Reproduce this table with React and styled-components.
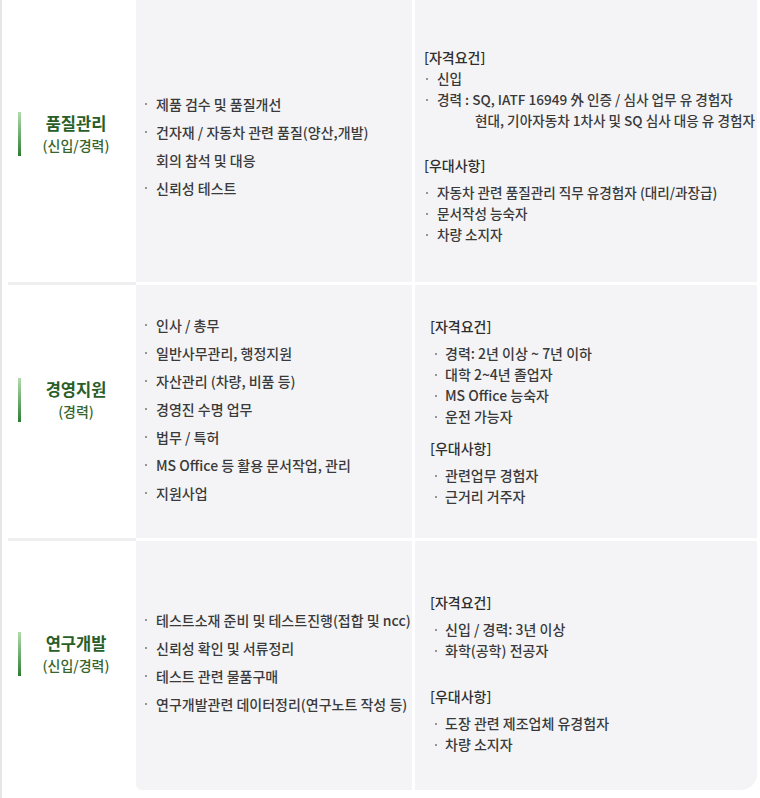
import React from "react";
import styled, { createGlobalStyle } from "styled-components";

const GlobalStyle = createGlobalStyle`
  body {
    margin: 0;
    background: #fff;
    font-family: "Noto Sans CJK KR", "Noto Sans", sans-serif;
  }
`;

const Page = styled.div`
  width: 760px;
  height: 798px;
  overflow: hidden;
  box-sizing: border-box;
  border-left: 2px solid #e6e6e6;
  padding: 0 3px 0 6px;
`;

const Table = styled.div`
  display: flex;
  flex-direction: column;
  margin-top: -10px;
`;

const Row = styled.div`
  display: grid;
  grid-template-columns: 128px 276px 1fr;
  height: ${(p) => p.$height}px;
`;

const Divider = styled.div`
  height: 3px;
  background: linear-gradient(to right, #efefef 0 128px, #fff 128px);
`;

const JobCell = styled.div`
  display: flex;
  align-items: center;
  padding: ${(p) => p.$pt || 0}px 0 24px;
  background: #fff;
`;

const Bar = styled.div`
  width: 3px;
  height: 44px;
  margin-left: 10px;
  background: linear-gradient(to bottom, #b3dcae, #2e7d32);
`;

const JobText = styled.div`
  flex: 1;
  text-align: center;
  padding-right: 5px;
`;

const JobTitle = styled.div`
  font-size: 16.5px;
  font-weight: 700;
  line-height: 22px;
  color: #2a5e27;
`;

const JobSub = styled.div`
  font-size: 14px;
  font-weight: 500;
  line-height: 22px;
  color: #36652f;
`;

const TaskCell = styled.div`
  display: flex;
  flex-direction: column;
  justify-content: center;
  padding: ${(p) => p.$pt || 0}px 0 ${(p) => p.$pb || 0}px 8px;
  background: #f4f4f6;
  border-bottom-left-radius: ${(p) => (p.$last ? 6 : 0)}px;
`;

const TaskItem = styled.div`
  display: flex;
  font-size: 14px;
  font-weight: 500;
  line-height: 28px;
  color: #3a3a3a;
  white-space: nowrap;
`;

const Bullet = styled.span`
  position: relative;
  flex: none;
  width: ${(p) => p.$width}px;
  &::before {
    content: "";
    display: ${(p) => (p.$empty ? "none" : "block")};
    position: absolute;
    left: ${(p) => p.$offset}px;
    top: 50%;
    width: 2px;
    height: 2px;
    margin-top: -1px;
    border-radius: 50%;
    background: #777;
  }
`;

const ReqCell = styled.div`
  display: flex;
  flex-direction: column;
  justify-content: center;
  margin-left: 3px;
  padding: ${(p) => p.$pt || 0}px 0 0 ${(p) => p.$pad}px;
  background: #f4f4f6;
  border-bottom-right-radius: ${(p) => (p.$last ? 16 : 0)}px;
  font-size: ${(p) => p.$size}px;
`;

const Heading = styled.div`
  font-size: 14px;
  font-weight: 500;
  line-height: 20px;
  color: #2e2e2e;
  margin-top: ${(p) => p.$gap || 0}px;
`;

const ReqList = styled.div`
  margin-top: ${(p) => (p.$tight ? 1 : 7)}px;
`;

const ReqItem = styled.div`
  display: flex;
  font-weight: 500;
  line-height: 21px;
  color: #3a3a3a;
  white-space: nowrap;
`;

const rows = [
  {
    height: 292,
    pt: 20,
    title: "품질관리",
    sub: "(신입/경력)",
    tasks: [
      "제품 검수 및 품질개선",
      "건자재 / 자동차 관련 품질(양산,개발)",
      ["회의 참석 및 대응"],
      "신뢰성 테스트",
    ],
    req: { pt: 20, pad: 9, offset: 2, width: 13, tight: true, gap: 24, size: 13.6, indent: 38 },
    quals: [
      "신입",
      { label: "경력 : ", lines: ["SQ, IATF 16949 外 인증 / 심사 업무 유 경험자", "현대, 기아자동차 1차사 및 SQ 심사 대응 유 경험자"] },
    ],
    prefs: ["자동차 관련 품질관리 직무 유경험자 (대리/과장급)", "문서작성 능숙자", "차량 소지자"],
  },
  {
    height: 253,
    pb: 5,
    title: "경영지원",
    sub: "(경력)",
    tasks: [
      "인사 / 총무",
      "일반사무관리, 행정지원",
      "자산관리 (차량, 비품 등)",
      "경영진 수명 업무",
      "법무 / 특허",
      "MS Office 등 활용 문서작업, 관리",
      "지원사업",
    ],
    req: { pad: 15, offset: 5, width: 15, gap: 11, size: 14 },
    quals: ["경력: 2년 이상 ~ 7년 이하", "대학 2~4년 졸업자", "MS Office 능숙자", "운전 가능자"],
    prefs: ["관련업무 경험자", "근거리 거주자"],
  },
  {
    height: 249,
    pb: 7,
    last: true,
    title: "연구개발",
    sub: "(신입/경력)",
    tasks: [
      "테스트소재 준비 및 테스트진행(접합 및 ncc)",
      "신뢰성 확인 및 서류정리",
      "테스트 관련 물품구매",
      "연구개발관련 데이터정리(연구노트 작성 등)",
    ],
    req: { pt: 16, pad: 15, offset: 5, width: 15, gap: 25, size: 14 },
    quals: ["신입 / 경력: 3년 이상", "화학(공학) 전공자"],
    prefs: ["도장 관련 제조업체 유경험자", "차량 소지자"],
  },
];

const Qual = ({ item, req }) => {
  if (typeof item === "string") {
    return (
      <ReqItem>
        <Bullet $width={req.width} $offset={req.offset} />
        {item}
      </ReqItem>
    );
  }
  return (
    <>
      <ReqItem>
        <Bullet $width={req.width} $offset={req.offset} />
        {item.label}
        {item.lines[0]}
      </ReqItem>
      <ReqItem>
        <Bullet $width={req.width + req.indent} $empty />
        {item.lines[1]}
      </ReqItem>
    </>
  );
};

const App = () => {
  return (
    <Page>
      <GlobalStyle />
      <Table>
        {rows.map((row, i) => (
          <React.Fragment key={row.title}>
            {i > 0 && <Divider />}
            <Row $height={row.height}>
              <JobCell $pt={row.pt}>
                <Bar />
                <JobText>
                  <JobTitle>{row.title}</JobTitle>
                  <JobSub>{row.sub}</JobSub>
                </JobText>
              </JobCell>
              <TaskCell $pt={row.pt} $pb={row.pb} $last={row.last}>
                {row.tasks.map((t) => {
                  const cont = Array.isArray(t);
                  return (
                    <TaskItem key={cont ? t[0] : t}>
                      <Bullet $width={12} $offset={1} $empty={cont} />
                      {cont ? t[0] : t}
                    </TaskItem>
                  );
                })}
              </TaskCell>
              <ReqCell $pt={row.req.pt} $pad={row.req.pad} $last={row.last} $size={row.req.size}>
                <Heading>[자격요건]</Heading>
                <ReqList $tight={row.req.tight}>
                  {row.quals.map((q, k) => (
                    <Qual key={k} item={q} req={row.req} />
                  ))}
                </ReqList>
                <Heading $gap={row.req.gap}>[우대사항]</Heading>
                <ReqList>
                  {row.prefs.map((p) => (
                    <Qual key={p} item={p} req={row.req} />
                  ))}
                </ReqList>
              </ReqCell>
            </Row>
          </React.Fragment>
        ))}
      </Table>
    </Page>
  );
};

export default App;
